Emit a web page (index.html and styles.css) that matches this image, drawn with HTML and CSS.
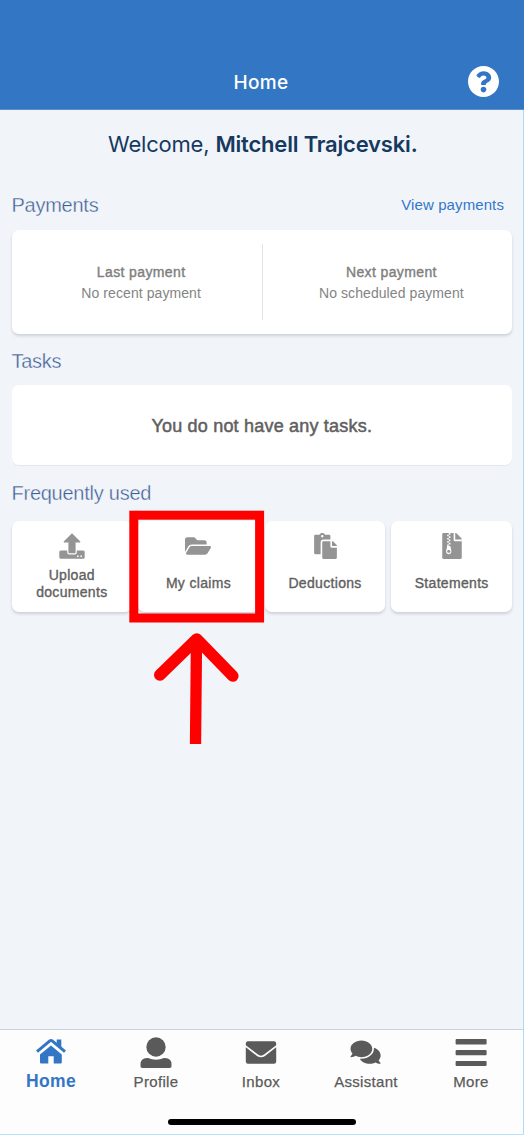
FILE: index.html
```html
<!DOCTYPE html>
<html lang="en">
<head>
<meta charset="utf-8">
<title>Home</title>
<link rel="stylesheet" href="styles.css">
</head>
<body>
<div class="app">
  <header class="topbar">
    <h1 class="topbar-title">Home</h1>
    <svg class="help" viewBox="8 8 496 496"><path d="M504 256c0 136.997-111.043 248-248 248S8 392.997 8 256C8 119.083 119.043 8 256 8s248 111.083 248 248zM262.655 90c-54.497 0-89.255 22.957-116.549 63.758-3.536 5.286-2.353 12.415 2.715 16.258l34.699 26.31c5.205 3.947 12.621 3.008 16.665-2.122 17.864-22.658 30.113-35.797 57.303-35.797 20.429 0 45.698 13.148 45.698 32.958 0 14.976-12.363 22.667-32.534 33.976C247.128 238.528 216 254.941 216 296v4c0 6.627 5.373 12 12 12h56c6.627 0 12-5.373 12-12v-1.333c0-28.462 83.186-29.647 83.186-106.667 0-58.002-60.165-102-116.531-102zM256 338c-25.365 0-46 20.635-46 46 0 25.364 20.635 46 46 46s46-20.636 46-46c0-25.365-20.635-46-46-46z"/></svg>
  </header>
  <main class="content">
    <p class="welcome">Welcome, <b class="welcome-name">Mitchell Trajcevski.</b></p>

    <div class="section-head payments-head">
      <h2 class="section-title">Payments</h2>
      <a class="view-link">View payments</a>
    </div>
    <section class="card payments">
      <div class="payment">
        <div class="payment-label">Last payment</div>
        <div class="payment-value">No recent payment</div>
      </div>
      <div class="payment next">
        <div class="payment-label">Next payment</div>
        <div class="payment-value">No scheduled payment</div>
      </div>
    </section>

    <div class="section-head tasks-head"><h2 class="section-title">Tasks</h2></div>
    <section class="card tasks">You do not have any tasks.</section>

    <div class="section-head used-head"><h2 class="section-title">Frequently used</h2></div>
    <section class="tiles">
      <div class="card tile">
        <svg class="tile-icon" width="26" height="26" viewBox="0 0 26 26"><path d="M13 .2 21.300 8.400Q21.700 9.400 20.700 9.400H16.600V19.500Q16.600 20.300 15.800 20.300H10.200Q9.400 20.300 9.400 19.500V9.400H5.300Q4.300 9.400 4.700 8.400Z"/><path fill-rule="evenodd" d="M1.8 17.500H8.200V19.600Q8.200 21.600 10.200 21.600H15.800Q17.800 21.600 17.800 19.600V17.500H24.200Q25.700 17.500 25.700 19V24.300Q25.700 25.800 24.200 25.800H1.800Q.3 25.800.3 24.300V19Q.3 17.500 1.800 17.500ZM18 22.500V24.100H19.600V22.500ZM21.400 22.500V24.100H23V22.500Z"/></svg>
        <span class="tile-label two-line">Upload<br>documents</span>
      </div>
      <div class="card tile">
        <svg class="tile-icon" width="26" height="26" viewBox="0 -32 576 576"><path d="M572.694 292.093L500.27 416.248A63.997 63.997 0 0 1 444.989 448H45.025c-18.523 0-30.064-20.093-20.731-36.093l72.424-124.155A64 64 0 0 1 152 256h399.964c18.523 0 30.064 20.093 20.73 36.093zM152 224h328v-48c0-26.51-21.49-48-48-48H272l-64-64H48C21.49 64 0 85.490 0 112v278.046l69.077-118.418C86.214 242.25 117.989 224 152 224z"/></svg>
        <span class="tile-label">My claims</span>
      </div>
      <div class="card tile">
        <svg class="tile-icon" width="23" height="26" viewBox="0 0 448 512"><path d="M128 184c0-30.879 25.122-56 56-56h136V56c0-13.255-10.745-24-24-24h-80.61C204.306 12.89 183.637 0 160 0s-44.306 12.89-55.39 32H24C10.745 32 0 42.745 0 56v336c0 13.255 10.745 24 24 24h104V184zm32-144c13.255 0 24 10.745 24 24s-10.745 24-24 24-24-10.745-24-24 10.745-24 24-24zm184 248h104v200c0 13.255-10.745 24-24 24H184c-13.255 0-24-10.745-24-24V184c0-13.255 10.745-24 24-24h136v104c0 13.2 10.8 24 24 24zm104-38.059V256h-96v-96h6.059a24 24 0 0 1 16.97 7.029l65.941 65.941a24.002 24.002 0 0 1 7.03 16.971z"/></svg>
        <span class="tile-label">Deductions</span>
      </div>
      <div class="card tile">
        <svg class="tile-icon" width="20" height="26" viewBox="0 0 384 512"><path d="M377 105L279.1 7c-4.5-4.5-10.6-7-17-7H256v128h128v-6.1c0-6.3-2.5-12.4-7-16.9zM128.4 336c-17.9 0-32.4 12.1-32.4 27 0 15 14.6 27 32.5 27s32.4-12.1 32.4-27-14.6-27-32.5-27zM224 136V0h-63.6v32h-32V0H24C10.7 0 0 10.7 0 24v464c0 13.3 10.7 24 24 24h336c13.3 0 24-10.7 24-24V160H248c-13.2 0-24-10.8-24-24zM95.9 32h32v32h-32zm32.3 384c-33.2 0-58-30.4-51.4-62.9L96.4 256v-32h32v-32h-32v-32h32v-32h-32V96h32V64h32v32h-32v32h32v32h-32v32h32v32h-32v32h22.1c5.7 0 10.7 4.1 11.8 9.7l17.3 87.7c6.4 32.4-18.4 62.6-51.4 62.6z"/></svg>
        <span class="tile-label">Statements</span>
      </div>
    </section>
  </main>
  <nav class="tabbar">
    <div class="tabs">
      <div class="tab active">
        <svg class="tab-icon" width="32" height="32" viewBox="0 0 32 32"><path d="M16 9.400 26.800 18.400V26.400Q26.800 27.500 25.700 27.500H18.700V20.300H13.300V27.500H6.100Q5 27.500 5 26.400V18.400Z"/><path d="M2 15.700 14.800 4.900Q16 4 17.200 4.900L30 15.700" fill="none" stroke="currentColor" stroke-width="3"/><path d="M21.700 3.600H26.300V13L21.700 9Z"/></svg>
        <span class="tab-label">Home</span>
      </div>
      <div class="tab">
        <svg class="tab-icon" width="32" height="32" viewBox="0 0 32 32"><circle cx="16" cy="11" r="9.700"/><path d="M.5 30.200V28.500Q.5 22 7 22H8Q16 25.400 24 22H25Q31.500 22 31.500 28.500V30.200Q31.500 32 29.800 32H2.200Q.5 32 .5 30.200Z"/></svg>
        <span class="tab-label">Profile</span>
      </div>
      <div class="tab">
        <svg class="tab-icon" width="32" height="32" viewBox="0 0 32 32"><path d="M3 5.300H29Q31.200 5.300 31.200 7.500V9.300L19 18.500Q16 20.800 13 18.500L.8 9.300V7.500Q.8 5.300 3 5.300Z"/><path d="M.8 11.300 12 19.900Q16 22.800 20 19.900L31.200 11.300V25.600Q31.200 27.800 29 27.800H3Q.8 27.800.8 25.600Z"/></svg>
        <span class="tab-label">Inbox</span>
      </div>
      <div class="tab">
        <svg class="tab-icon" width="32" height="32" viewBox="-10 -53 612 612"><path d="M416 192c0-88.400-93.100-160-208-160S0 103.600 0 192c0 34.300 14.100 65.900 38 92-13.400 30.200-35.500 54.200-35.800 54.500-2.200 2.300-2.800 5.700-1.500 8.700S4.800 352 8 352c36.600 0 66.900-12.300 88.700-25 32.200 15.700 70.300 25 111.300 25 114.900 0 208-71.600 208-160zm122 220c23.900-26 38-57.700 38-92 0-66.900-53.500-124.200-129.300-148.100.9 6.600 1.300 13.300 1.300 20.100 0 105.900-107.700 192-240 192-10.800 0-21.300-.8-31.700-1.900C207.800 439.600 281.800 480 368 480c41 0 79.100-9.200 111.300-25 21.800 12.700 52.100 25 88.700 25 3.200 0 6.100-1.900 7.300-4.800 1.300-2.900.7-6.300-1.500-8.700-.3-.3-22.400-24.200-35.800-54.500z"/></svg>
        <span class="tab-label">Assistant</span>
      </div>
      <div class="tab">
        <svg class="tab-icon" width="32" height="32" viewBox="0 0 32 32"><rect x=".6" y="3" width="31" height="5.400" rx="1"/><rect x=".6" y="14" width="31" height="5.200" rx="1"/><rect x=".6" y="25" width="31" height="5" rx="1"/></svg>
        <span class="tab-label">More</span>
      </div>
    </div>
    <div class="home-indicator"></div>
  </nav>
  <svg class="callout" width="140" height="240" viewBox="125 508 140 240">
    <rect x="133.800" y="515.200" width="125.800" height="102.800" fill="none" stroke="#f00" stroke-width="9"/>
    <path d="M196.500 640 195.500 744" fill="none" stroke="#f00" stroke-width="11.300"/>
    <path d="M159.800 675 196.800 639 232.800 676" fill="none" stroke="#f00" stroke-width="11.600" stroke-linecap="round" stroke-linejoin="round"/>
  </svg>
</div>
</body>
</html>
```
FILE: styles.css
```css
* { box-sizing: border-box; }
body { margin: 0; font-family: "Liberation Sans", Arial, sans-serif; }
h1, h2, p { margin: 0; font-weight: 400; }
svg { display: block; fill: currentColor; flex: none; }

.app {
  position: relative;
  width: 524px;
  height: 1135px;
  display: flex;
  flex-direction: column;
  background: #f1f5fa;
  border-right: 1px solid #b5d9f3;
  border-bottom: 1px solid #b9e2f8;
}

.topbar {
  height: 110px;
  margin-right: -1px;
  padding: 54px 25px 0 23px;
  display: grid;
  grid-template-columns: 1fr auto 1fr;
  align-items: center;
  background: #3376c4;
  border-bottom: 1px solid #5a90cf;
  color: #fff;
}
.topbar-title {
  grid-column: 2;
  font: 500 19px/24px Inter, sans-serif;
  letter-spacing: 0.3px;
  padding-top: 2px;
}
.help { width: 31px; height: 31px; justify-self: end; }

.content { flex: 1; padding: 0 11px 0 11.5px; }
.welcome {
  padding-top: 19px;
  height: 82px;
  text-align: center;
  font: 400 22px/30px Inter, sans-serif;
  letter-spacing: -0.19px;
  color: #16395f;
  white-space: nowrap;
  padding-left: 2px;
}
.welcome-name { font-weight: 600; }

.section-head { display: flex; justify-content: space-between; align-items: flex-start; }
.section-title {
  font-size: 20px;
  line-height: 26px;
  letter-spacing: -0.25px;
  color: #3f5f96;
  -webkit-text-stroke: 0.35px #f1f5fa;
}
.payments-head { height: 38px; }
.tasks-head { height: 51px; padding-top: 14px; }
.used-head { height: 55px; padding-top: 14px; }
.view-link { font-size: 15px; line-height: 26px; letter-spacing: 0.1px; color: #3178cb; padding-right: 8px; }

.card {
  background: #fff;
  border-radius: 7px;
  box-shadow: 0 2px 3px rgba(60, 70, 85, 0.2);
}
.payments { height: 104px; display: flex; align-items: center; }
.payment {
  flex: 1;
  height: 76px;
  display: flex;
  flex-direction: column;
  justify-content: center;
  text-align: center;
  padding-top: 1px;
  padding-left: 9px;
  font-size: 14px;
  line-height: 20.5px;
  letter-spacing: 0.08px;
  color: #848484;
}
.next { border-left: 1px solid #e3e3e5; padding-left: 8px; }
.payment-label { letter-spacing: 0.38px; color: #7f7f7f; -webkit-text-stroke: 0.4px; }
.tasks {
  height: 81px;
  padding-top: 2px;
  display: flex;
  align-items: center;
  justify-content: center;
  font-size: 18px;
  letter-spacing: 0.2px;
  color: #606060;
  -webkit-text-stroke: 0.5px;
  box-shadow: inset 0 -1px 0 #e4e6e9;
}

.tiles { display: grid; grid-template-columns: repeat(4, 1fr); gap: 6px; }
.tile {
  height: 91px;
  padding-top: 12px;
  display: flex;
  flex-direction: column;
  align-items: center;
  color: #949494;
}
.tile-label {
  margin-top: 16px;
  font-size: 14px;
  line-height: 17px;
  letter-spacing: 0.32px;
  text-align: center;
  color: #606060;
  -webkit-text-stroke: 0.35px;
}
.two-line { margin-top: 8px; line-height: 16.5px; }

.tabbar {
  height: 105px;
  margin-right: -1px;
  border-top: 1px solid #c9d2da;
  border-right: 1px solid #b5d9f3;
  background: #fdfdfd;
}
.tabs { display: grid; grid-template-columns: repeat(5, 105px); margin-left: -1.5px; height: 89px; }
.tab { display: flex; flex-direction: column; align-items: center; padding-top: 6px; color: #5a5a5a; }
.tab-label { margin-top: 4px; font-size: 15px; line-height: 20px; -webkit-text-stroke: 0.25px; letter-spacing: 0.32px; }
.active { color: #3376c4; }
.active .tab-label { font-size: 17.5px; font-weight: 700; -webkit-text-stroke: 0; margin-top: 3px; }
.home-indicator { width: 188px; height: 6px; margin: 0 auto; border-radius: 3px; background: #000; }

.callout { position: absolute; left: 125px; top: 508px; }
```
